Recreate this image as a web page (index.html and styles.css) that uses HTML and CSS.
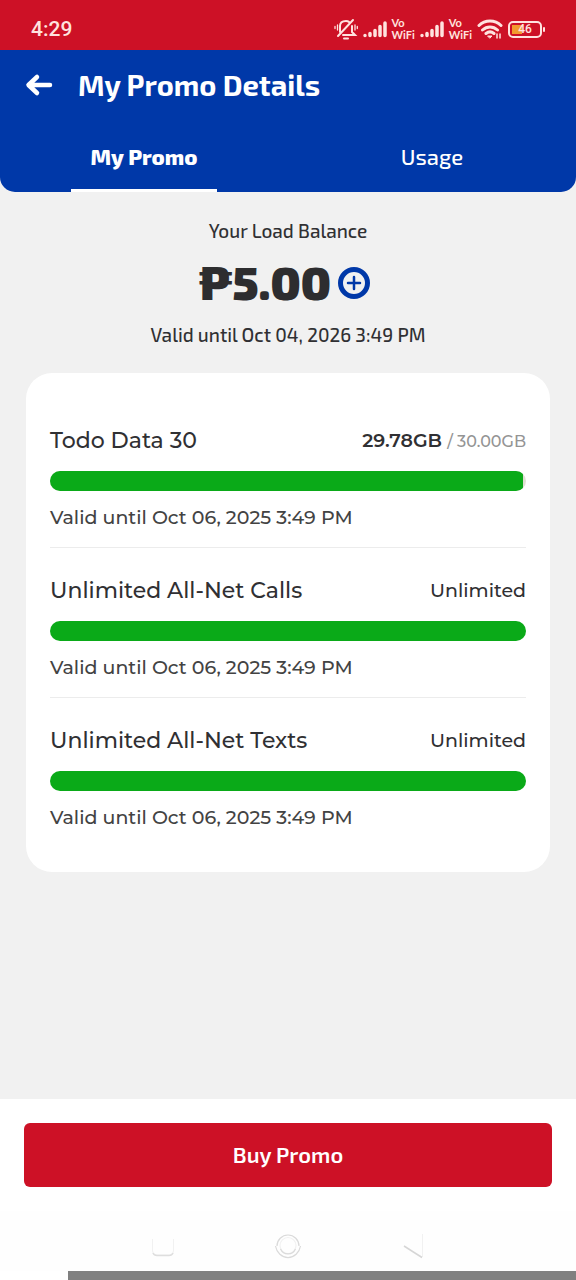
FILE: index.html
```html
<!DOCTYPE html>
<html lang="en">
<head>
<meta charset="utf-8">
<meta name="viewport" content="width=device-width, initial-scale=1">
<title>My Promo Details</title>
<link rel="stylesheet" href="styles.css">
</head>
<body>
<div class="app">
  <div class="status">
    <span class="status-time">4:29</span>
    <div class="status-icons">
      <svg class="icon-bell" width="24" height="22" viewBox="0 0 24 22" fill="none" stroke="#ffe3df" stroke-width="2" stroke-linecap="round" aria-label="Muted">
        <path d="M6 14V8c0-3 2-5 6-5 1 0 2 0 3 1M18 8v6l3 3H9M4 18L19 2"/><path d="M10 20.500h4"/><path d="M3.500 7v5M21 7v5M1 8.500v2M23.300 8.500v2" stroke-width="1.300"/>
      </svg>
      <svg class="icon-signal" width="24" height="18" viewBox="0 0 24 18" stroke="#ffe3df" stroke-width="3.500" stroke-linecap="round" aria-label="Signal one"><path d="M2 15.500v0M7 13.500v2M12 10.500v5M17 6.500v9M22 3v12.500"/></svg>
      <span class="vowifi">Vo<br>WiFi</span>
      <svg class="icon-signal" width="24" height="18" viewBox="0 0 24 18" stroke="#ffe3df" stroke-width="3.500" stroke-linecap="round" aria-label="Signal two"><path d="M2 15.500v0M7 13.500v2M12 10.500v5M17 6.500v9M22 3v12.500"/></svg>
      <span class="vowifi">Vo<br>WiFi</span>
      <svg class="icon-wifi" width="26" height="20" viewBox="0 0 26 20" fill="none" stroke="#ffe3df" stroke-width="3" stroke-linecap="round" aria-label="Wi-Fi"><path d="M2 6.500c6-6 16-6 22 0M5.500 11c4.500-4 10.500-4 15 0M9 14.500c2.500-2 5.500-2 8 0"/><path d="M11 17h4l-2 2z" fill="#ffe3df" stroke-width="1"/><path d="M20 15v4M23 15v4" stroke-width="1.500"/></svg>
      <span class="battery"><span class="battery-level">46</span></span>
    </div>
  </div>

  <header class="header">
    <div class="title-row">
      <button class="back" type="button" aria-label="Back">
        <svg width="28" height="24" viewBox="0 0 28 24" fill="none" stroke="#fff" stroke-width="4.500" stroke-linecap="round" stroke-linejoin="round"><path d="M25 12H4M12 4l-8.500 8 8.500 8"/></svg>
      </button>
      <h1 class="title">My Promo Details</h1>
    </div>
    <nav class="tabs">
      <button class="tab tab-active" type="button">My Promo</button>
      <button class="tab" type="button">Usage</button>
    </nav>
  </header>

  <main class="content">
    <section class="balance">
      <p class="balance-text">Your Load Balance</p>
      <div class="amount-row">
        <span class="amount">₱5.00</span>
        <button class="add" type="button" aria-label="Add load">
          <svg width="32" height="32" viewBox="0 0 32 32" fill="none" stroke="#0038a8"><circle cx="16" cy="16" r="13.500" stroke-width="5"/><path d="M16 10v12M10 16h12" stroke-width="2.500" stroke-linecap="round"/></svg>
        </button>
      </div>
      <p class="balance-text">Valid until Oct 04, 2026 3:49 PM</p>
    </section>

    <section class="card">
      <article class="item">
        <div class="item-head"><h2 class="item-name" id="data">Todo Data 30</h2><p class="item-value"><span class="used">29.78GB</span> <span class="total">/ 30.00GB</span></p></div>
        <progress class="bar bar-partial" aria-labelledby="data" value="29.78" max="30"></progress>
        <p class="item-date">Valid until Oct 06, 2025 3:49 PM</p>
      </article>
      <article class="item">
        <div class="item-head"><h2 class="item-name" id="calls">Unlimited All-Net Calls</h2><p class="item-value">Unlimited</p></div>
        <progress class="bar" aria-labelledby="calls" value="1" max="1"></progress>
        <p class="item-date">Valid until Oct 06, 2025 3:49 PM</p>
      </article>
      <article class="item">
        <div class="item-head"><h2 class="item-name" id="texts">Unlimited All-Net Texts</h2><p class="item-value">Unlimited</p></div>
        <progress class="bar" aria-labelledby="texts" value="1" max="1"></progress>
        <p class="item-date">Valid until Oct 06, 2025 3:49 PM</p>
      </article>
    </section>
  </main>

  <footer class="footer">
    <div class="action"><button class="buy" type="button">Buy Promo</button></div>
    <nav class="system-nav">
      <button class="nav-button" type="button" aria-label="Recent apps"><svg width="28" height="28" viewBox="0 0 28 28" fill="none" stroke="#dedede"><path d="M3.500 6v12q0 4 4 4h13q4 0 4-4V6" stroke="#f1f1f1"/><path d="M4 20q1 2.500 4 2.500h12q3 0 4-2.500" stroke-width="1.500"/></svg></button>
      <button class="nav-button" type="button" aria-label="Home"><svg width="28" height="28" viewBox="0 0 28 28" fill="none" stroke="#dadada" stroke-width="1.200"><path d="M3 13a11 11 0 0 1 22 0"/><path d="M1.500 13a12.700 14 0 0 0 25 0"/><circle cx="14" cy="12.500" r="8" stroke="#f1f1f1"/><path d="M6.500 16c3 6.500 12 6.500 15 0"/></svg></button>
      <button class="nav-button" type="button" aria-label="Back"><svg width="28" height="28" viewBox="0 0 28 28" fill="none" stroke="#d6d6d6"><path d="M23.500 1v23" stroke="#f1f1f1"/><path d="M5 13l18 11.500" stroke-width="1.500"/></svg></button>
    </nav>
    <div class="edge"></div>
  </footer>
</div>
</body>
</html>
```
FILE: styles.css
```css
* { box-sizing: border-box; }
body, h1, h2, p { margin: 0; }
body { background: #f1f1f1; color: #303033; font-family: "Exo 2", "Noto Sans", sans-serif; }
button { border: 0; padding: 0; background: none; font: inherit; color: inherit; }
svg { display: block; }

.app { min-height: 100vh; display: flex; flex-direction: column; }

.status { height: 50px; padding: 8px 34px 0 31px; display: flex; align-items: center; justify-content: space-between; background: #cd1126; color: #ffe3df; }
.status-time { font: 500 21px/24px Roboto, sans-serif; }
.status-icons { display: flex; align-items: center; gap: 5px; }
.vowifi { font: 700 11px/12px Lato, sans-serif; }
.battery { position: relative; width: 34px; height: 17px; padding: 2px; border: 2px solid #ffe3df; border-radius: 5px; }
.battery::after { content: ""; position: absolute; right: -5px; top: 4px; width: 2px; height: 5px; background: #ffe3df; border-radius: 1px; }
.battery-level { display: block; height: 9px; background: linear-gradient(90deg, #f29a2e 40%, transparent 40%); text-align: center; font: 500 12px/9px Roboto, sans-serif; }

.header { background: #0038a8; color: #fff; border-radius: 0 0 15px 15px; }
.title-row { height: 70px; padding: 0 25px; display: flex; align-items: center; gap: 25px; }
.title { font-size: 29px; line-height: 36px; font-weight: 700; }
.tabs { display: grid; grid-template-columns: 1fr 1fr; }
.tab { position: relative; height: 72px; font-size: 22px; line-height: 28px; font-weight: 500; }
.tab-active { font-weight: 800; }
.tab-active::after { content: ""; position: absolute; left: 0; right: 0; bottom: 0; width: 51%; height: 3px; margin: 0 auto; background: #fff; }

.content { flex: 1; padding: 27px 26px; }
.balance { display: flex; flex-direction: column; align-items: center; padding-bottom: 26px; }
.balance-text { font-size: 19px; line-height: 24px; font-weight: 500; }
.amount-row { height: 80px; padding-right: 7px; display: flex; align-items: center; gap: 7px; }
.amount { padding-bottom: 2px; font: 900 46px/48px "Exo 2", Inter, sans-serif; color: #2d2d2f; }

.card { padding: 25px 24px; background: #fff; border-radius: 26px; font-family: Montserrat, Inter, sans-serif; }
.item { padding: 29px 0 17px; border-bottom: 1px solid #ececec; }
.item:last-child { border-bottom: 0; }
.item-head { display: flex; justify-content: space-between; align-items: center; height: 28px; margin-bottom: 16px; }
.item-name { font-size: 22px; line-height: 28px; font-weight: 500; }
.item-value { font-size: 19px; line-height: 28px; font-weight: 500; }
.used { font-weight: 600; }
.total { font-size: 16px; font-weight: 500; color: #949494; }
.bar { -webkit-appearance: none; appearance: none; display: block; width: 100%; height: 20px; margin-bottom: 15px; border: 0; border-radius: 10px; overflow: hidden; }
.bar::-webkit-progress-bar { background: #dfdfd2; }
.bar::-webkit-progress-value { background: #0aaa18; }
.bar-partial::-webkit-progress-value { border-radius: 0 4px 4px 0; }
.item-date { font-size: 19px; line-height: 24px; font-weight: 500; color: #434343; }

.footer { background: #fff; }
.action { padding: 24px; }
.buy { width: 100%; height: 64px; padding-bottom: 2px; border-radius: 6px; background: #cd1126; color: #fff; font-size: 22px; line-height: 28px; font-weight: 600; }
.system-nav { height: 60px; padding-top: 12px; display: flex; justify-content: center; align-items: center; gap: 97px; background: #fefefe; }
.edge { height: 9px; margin-left: 68px; background: #808080; }
```
